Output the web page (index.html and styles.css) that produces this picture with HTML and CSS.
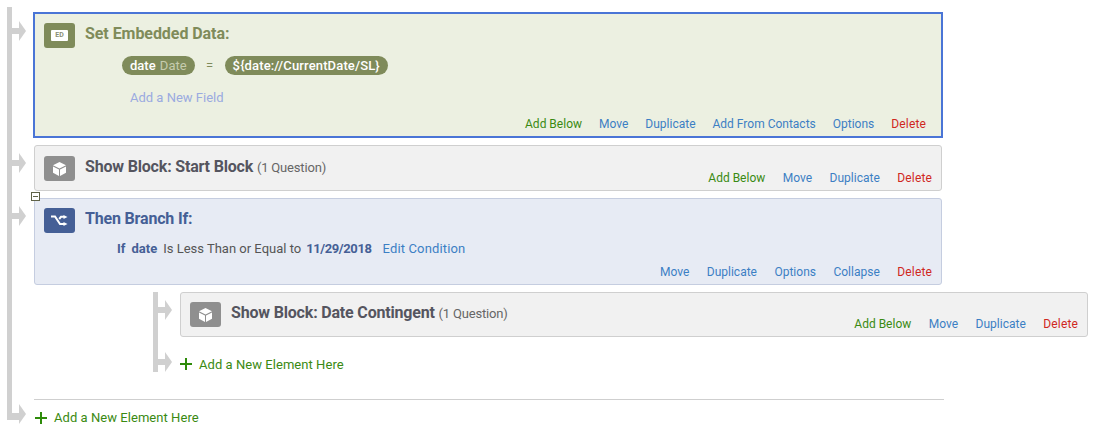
FILE: index.html
```html
<!DOCTYPE html>
<html lang="en">
<head>
<meta charset="utf-8">
<title>Survey Flow</title>
<link rel="stylesheet" href="styles.css">
</head>
<body>
<main class="flow">
  <section class="step step-first">
    <div class="card card-ed">
      <div class="head">
        <span class="icon icon-ed"><span class="ed-tag">ED</span></span>
        <h2 class="title title-ed">Set Embedded Data:</h2>
      </div>
      <div class="assign">
        <span class="pill">date <span class="pill-dim">Date</span></span>
        <span class="eq">=</span>
        <span class="pill pill-value">${date://CurrentDate/SL}</span>
      </div>
      <div class="add-field">Add a New Field</div>
      <div class="actions actions-ed">
        <a class="add">Add Below</a><a>Move</a><a>Duplicate</a><a>Add From Contacts</a><a>Options</a><a class="del">Delete</a>
      </div>
    </div>
  </section>

  <section class="step">
    <div class="card card-block card-start">
      <div class="head">
        <span class="icon icon-block">
          <svg width="13" height="14" viewBox="0 0 13 14"><path d="M6.500 0L13 3.300 6.500 6.500 0 3.300z" fill="#fff"/><path d="M0 4.500l6 3V14l-6-3.200zM13 4.500l-6 3V14l6-3.200z" fill="#fff"/></svg>
        </span>
        <h2 class="title">Show Block: Start Block <small>(1 Question)</small></h2>
      </div>
      <div class="actions">
        <a class="add">Add Below</a><a>Move</a><a>Duplicate</a><a class="del">Delete</a>
      </div>
    </div>
  </section>

  <section class="step">
    <span class="toggle"></span>
    <div class="card card-branch">
      <div class="head">
        <span class="icon icon-branch">
          <svg width="17" height="11" viewBox="0 0 17 11"><path d="M0 1.500h4l5 7.500h4M8.200 4L10 1.800h3" fill="none" stroke="#fff" stroke-width="2"/><path d="M12.500 0l4 2-4 2zM12.500 7l4 2-4 2z" fill="#fff"/></svg>
        </span>
        <h2 class="title title-branch">Then Branch If:</h2>
      </div>
      <div class="condition"><b>If</b> <b>date</b> <span>Is Less Than or Equal to</span> <b class="cond-date">11/29/2018</b> <a>Edit Condition</a></div>
      <div class="actions actions-branch">
        <a>Move</a><a>Duplicate</a><a>Options</a><a>Collapse</a><a class="del">Delete</a>
      </div>
    </div>
  </section>

  <div class="nested">
    <section class="step step-nested">
      <div class="card card-block card-wide">
        <div class="head">
          <span class="icon icon-block">
            <svg width="13" height="14" viewBox="0 0 13 14"><path d="M6.500 0L13 3.300 6.500 6.500 0 3.300z" fill="#fff"/><path d="M0 4.500l6 3V14l-6-3.200zM13 4.500l-6 3V14l6-3.200z" fill="#fff"/></svg>
          </span>
          <h2 class="title">Show Block: Date Contingent <small>(1 Question)</small></h2>
        </div>
        <div class="actions">
          <a class="add">Add Below</a><a>Move</a><a>Duplicate</a><a class="del">Delete</a>
        </div>
      </div>
    </section>
    <div class="step step-nested add-element add-element-nested"><span class="plus"></span>Add a New Element Here</div>
  </div>

  <div class="step add-element add-element-root"><span class="plus"></span>Add a New Element Here</div>
</main>
</body>
</html>
```
FILE: styles.css
```css
* { box-sizing: border-box; }

body {
  margin: 0;
  background: #fff;
  font-family: Roboto, "Liberation Sans", sans-serif;
  font-size: 13px;
  color: #555;
}

.flow {
  position: relative;
  width: 910px;
  margin-left: 34px;
  padding-top: 12px;
}

/* main vertical rail */
.flow::before {
  content: "";
  position: absolute;
  left: -27px;
  top: 7px;
  width: 5px;
  height: 413px;
  background: #d0d0d0;
}

.step {
  position: relative;
  margin-bottom: 7px;
}

/* connector stub */
.step::before {
  content: "";
  position: absolute;
  left: -22px;
  top: 15px;
  width: 8px;
  height: 6px;
  background: #d0d0d0;
}

/* connector arrow head */
.step::after {
  content: "";
  position: absolute;
  left: -15px;
  top: 8px;
  border-left: 7px solid #d0d0d0;
  border-top: 10px solid transparent;
  border-bottom: 10px solid transparent;
}

.step-first::before { top: 16px; }
.step-first::after { top: 9px; }

.card {
  width: 908px;
  border: 1px solid #cfcfcf;
  border-radius: 3px;
  padding: 9px;
}

.card-ed {
  width: 910px;
  height: 126px;
  margin-left: -1px;
  border: 2px solid #4a75d6;
  border-radius: 0;
  background: #ecf0e1;
}

.card-block {
  height: 46px;
  display: flex;
  justify-content: space-between;
  background: #f1f1f1;
}

.card-start { padding-top: 10px; }

.card-branch {
  height: 87px;
  background: #e7ebf4;
  border-color: #c5cde0;
}

.card-wide {
  height: 45px;
}

.head {
  display: flex;
  align-items: flex-start;
  gap: 10px;
}

.icon {
  flex: none;
  width: 31px;
  height: 25px;
  border-radius: 3px;
  display: flex;
  align-items: center;
  justify-content: center;
}

.icon-ed { background: #7f8b5a; }
.icon-block { background: #8f8f8f; }
.icon-branch { background: #455f96; }

.ed-tag {
  width: 17px;
  height: 11px;
  border-radius: 1px;
  background: #fff;
  color: #8a8f75;
  font-size: 7px;
  font-weight: 700;
  line-height: 11px;
  text-align: center;
}

.title {
  margin: 0;
  font-size: 16px;
  font-weight: 700;
  line-height: 22px;
  letter-spacing: -0.18px;
  color: #55555f;
  white-space: nowrap;
}

.title small {
  font-size: 13px;
  font-weight: 400;
  color: #666;
}

.title-ed { color: #7f8b5a; letter-spacing: -0.06px; }
.title-branch { color: #455f96; }

.assign {
  display: flex;
  align-items: center;
  margin: 8px 0 0 78px;
}

.pill {
  height: 19px;
  padding: 0 8px;
  border-radius: 10px;
  background: #7f8b5a;
  color: #fff;
  font-weight: 500;
  line-height: 19px;
  white-space: nowrap;
}

.pill-value { letter-spacing: 0.14px; }

.pill-dim {
  margin-left: 1px;
  color: #c6ccae;
  font-weight: 400;
}

.eq {
  width: 30px;
  text-align: center;
  color: #7f8b5a;
}

.add-field {
  margin: 14px 0 0 86px;
  color: #9aaae0;
  line-height: 18px;
}

.actions {
  display: flex;
  justify-content: flex-end;
  gap: 17.5px;
  align-self: flex-end;
  font-size: 12px;
  line-height: 14px;
  margin-bottom: -4px;
  white-space: nowrap;
}

.actions a { color: #3c7fc4; }
.actions .add { color: #3a8a12; }
.actions .del { color: #d0281e; letter-spacing: 0.15px; }

.actions-ed { gap: 17px; margin-top: 10px; padding-right: 6px; }
.actions-branch { margin-top: 7px; }

.condition {
  display: flex;
  gap: 6px;
  margin: 7px 0 0 73px;
  line-height: 18px;
  white-space: nowrap;
}

.condition b { color: #455f96; font-weight: 700; }
.condition .cond-date { margin-left: -1px; letter-spacing: -0.4px; }
.condition span { color: #555; }
.condition a { color: #3c7fc4; margin-left: 5px; letter-spacing: 0.15px; }

.toggle {
  position: absolute;
  z-index: 1;
  left: -3px;
  top: -6px;
  width: 9px;
  height: 9px;
  border: 1px solid #5f6248;
  background: #fff;
}

.toggle::before {
  content: "";
  position: absolute;
  left: 1px;
  top: 3px;
  width: 5px;
  height: 1px;
  background: #5f6248;
}

.nested {
  position: relative;
  margin-left: 146px;
  height: 107px;
}

.nested::before {
  content: "";
  position: absolute;
  left: -27px;
  top: 0;
  width: 5px;
  height: 80px;
  background: #d0d0d0;
}

.nested .step { width: 908px; }

.add-element {
  display: flex;
  align-items: center;
  gap: 7px;
  height: 18px;
  color: #3a8a12;
  letter-spacing: 0.05px;
  white-space: nowrap;
}

.add-element::before { top: 4px; }
.add-element::after { top: -3px; }

.add-element-nested { margin-top: 18px; }

.add-element-root {
  border-top: 1px solid #cfcfcf;
  height: 36px;
}

.add-element-root::before { top: 13px; height: 7px; }
.add-element-root::after { top: 4px; }

.add-element-root .plus { margin-left: 1px; }

.plus {
  position: relative;
  flex: none;
  width: 12px;
  height: 12px;
  background:
    linear-gradient(#2e8b0a, #2e8b0a) center / 2px 12px no-repeat,
    linear-gradient(#2e8b0a, #2e8b0a) center / 12px 2px no-repeat;
}
```
